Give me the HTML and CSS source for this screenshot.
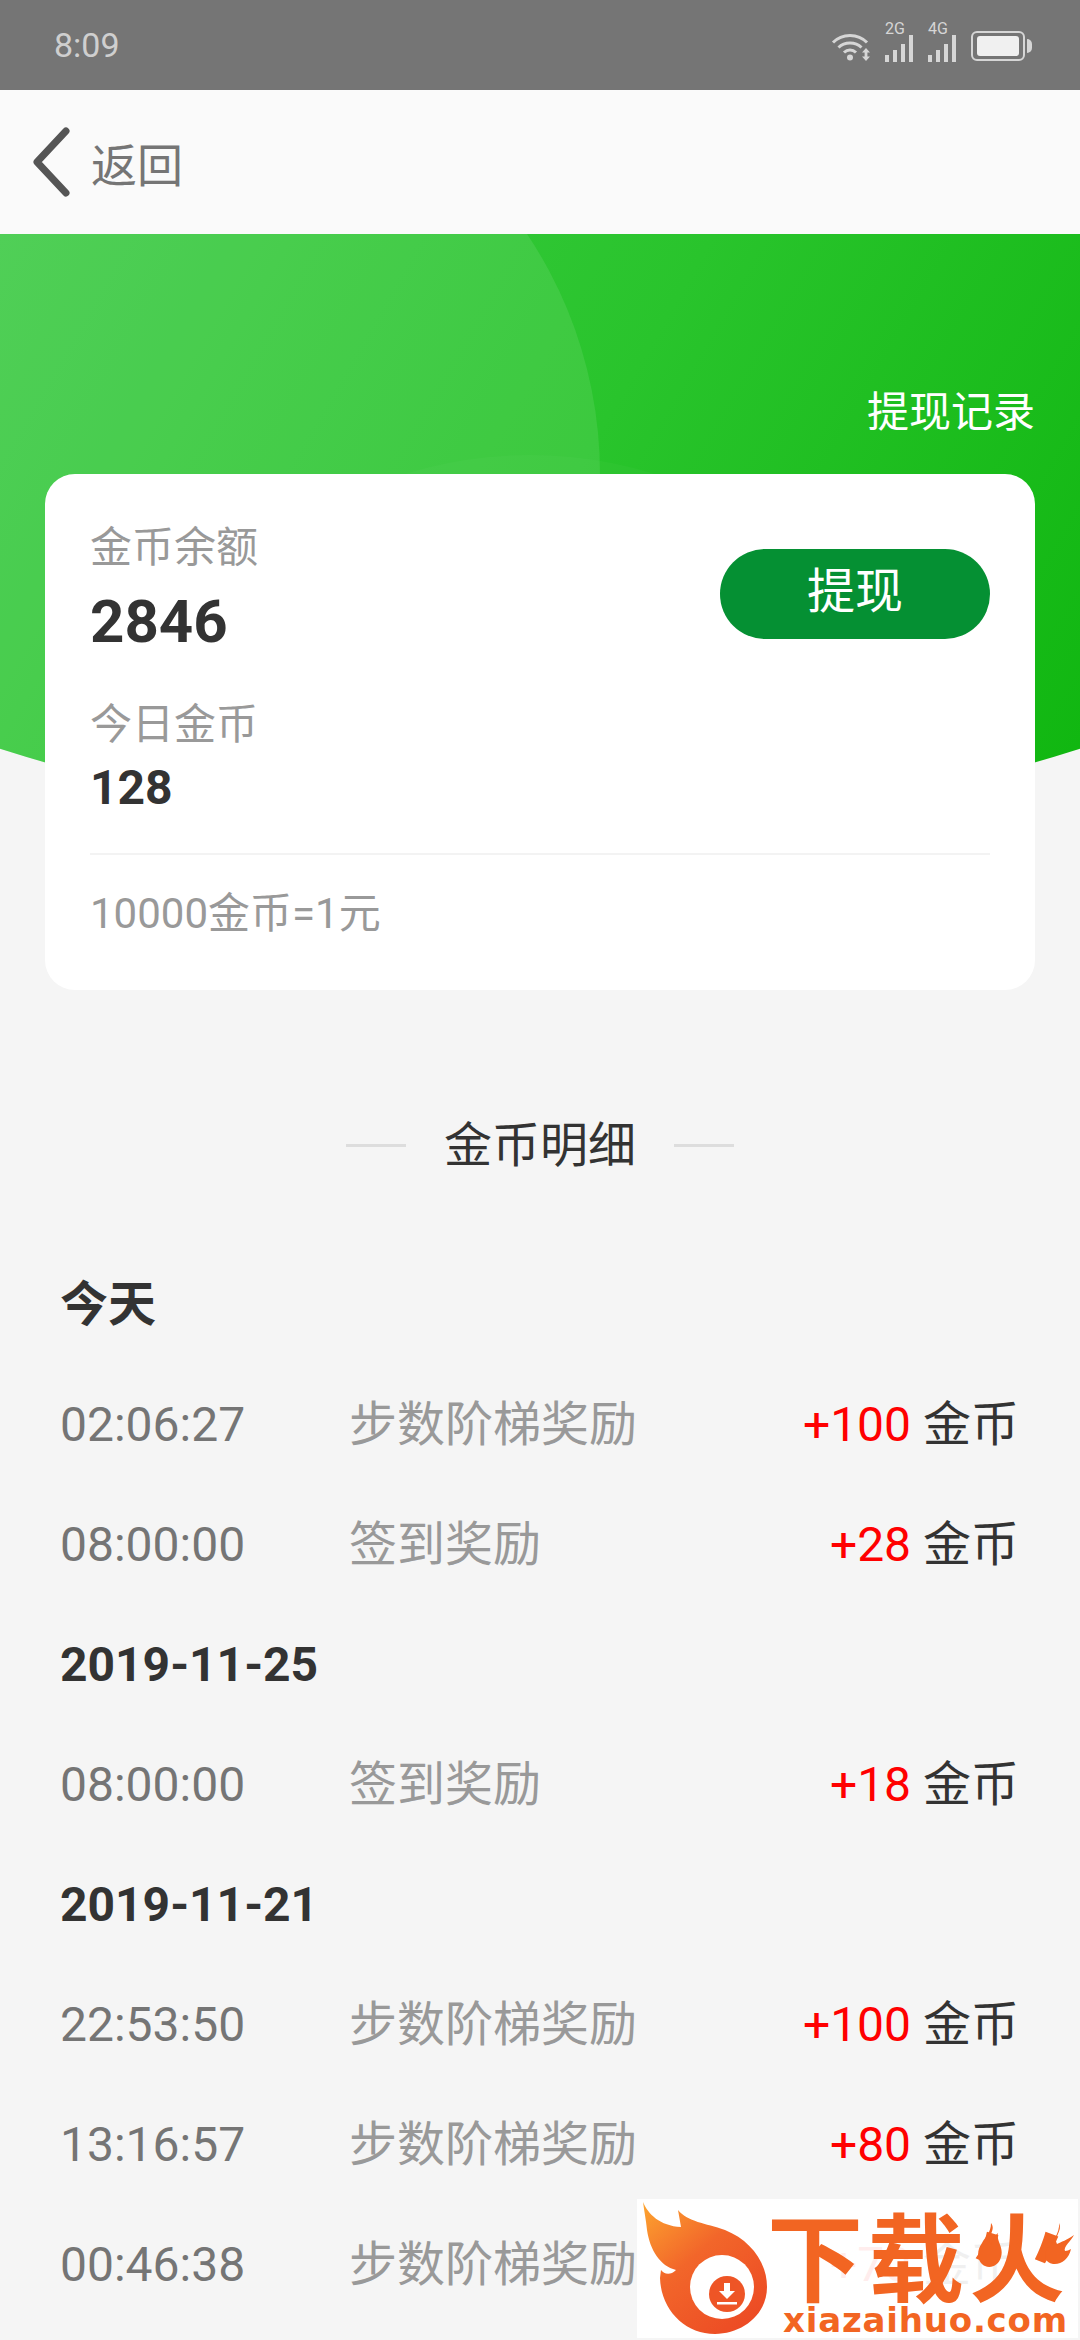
FILE: index.html
```html
<!DOCTYPE html>
<html lang="zh-CN">
  <head>
    <meta charset="UTF-8" />
    <meta name="viewport" content="width=device-width, initial-scale=1.0" />
    <title>金币明细</title>
    <link rel="stylesheet" href="styles.css">
  </head>
  <body>
    <div class="status">
      <span class="status-time">8:09</span>
      <div class="status-icons">
        <svg class="ic-wifi" width="40" height="30" viewBox="0 0 40 30">
          <path d="M2 10.5C11 1 27 1 36 10.5M7.5 15.500C13.500 9.500 24.500 9.500 30.500 15.500M13 20.500C16.500 17 21.500 17 25 20.500" fill="none" stroke="#d6d6d6" stroke-width="3" />
          <circle cx="19" cy="25.500" r="3" fill="#d6d6d6" />
          <path d="M35 16l4 4.500h-2.600v4H39L35 29l-4-4.500h2.600v-4H31z" fill="#d6d6d6" />
        </svg>
        <div class="sig">
          <span class="sig-label">2G</span>
          <span class="sig-bar h1"></span><span class="sig-bar h2"></span><span class="sig-bar h3"></span><span class="sig-bar h4"></span>
        </div>
        <div class="sig">
          <span class="sig-label">4G</span>
          <span class="sig-bar h1"></span><span class="sig-bar h2"></span><span class="sig-bar h3"></span><span class="sig-bar h4"></span>
        </div>
        <div class="batt"><div class="batt-fill"></div></div>
        <div class="batt-nub"></div>
      </div>
    </div>

    <div class="nav">
      <svg class="back-ic" width="40" height="70" viewBox="0 0 40 70">
        <path d="M34 4L5 35l29 31" fill="none" stroke="#555555" stroke-width="7" stroke-linecap="round" stroke-linejoin="round" />
      </svg>
      <span class="back-text">返回</span>
    </div>

    <div class="hero">
      <div class="hero-bg">
        <div class="hero-circle"></div>
        <div class="hero-circle2"></div>
      </div>
      <div class="record-link">提现记录</div>

      <div class="card">
        <div class="card-head">
          <div>
            <div class="label">金币余额</div>
            <div class="big-num">2846</div>
          </div>
          <div class="btn">提现</div>
        </div>
        <div class="label label-today">今日金币</div>
        <div class="mid-num">128</div>
        <div class="card-line"></div>
        <div class="rate">10000金币=1元</div>
      </div>
    </div>

    <div class="sec-title">
      <span class="sec-dash"></span>
      <span>金币明细</span>
      <span class="sec-dash"></span>
    </div>

    <div class="list">
      <div class="day">今天</div>
      <div class="row">
        <span class="time">02:06:27</span>
        <span class="desc">步数阶梯奖励</span>
        <span class="amount"><b>+100</b> 金币</span>
      </div>
      <div class="row">
        <span class="time">08:00:00</span>
        <span class="desc">签到奖励</span>
        <span class="amount"><b>+28</b> 金币</span>
      </div>
      <div class="day">2019-11-25</div>
      <div class="row">
        <span class="time">08:00:00</span>
        <span class="desc">签到奖励</span>
        <span class="amount"><b>+18</b> 金币</span>
      </div>
      <div class="day">2019-11-21</div>
      <div class="row">
        <span class="time">22:53:50</span>
        <span class="desc">步数阶梯奖励</span>
        <span class="amount"><b>+100</b> 金币</span>
      </div>
      <div class="row">
        <span class="time">13:16:57</span>
        <span class="desc">步数阶梯奖励</span>
        <span class="amount"><b>+80</b> 金币</span>
      </div>
      <div class="row">
        <span class="time">00:46:38</span>
        <span class="desc">步数阶梯奖励</span>
        <span class="amount"><b>+70</b> 金币</span>
      </div>
    </div>

    <div class="wm">
      <svg class="wm-logo" width="130" height="135" viewBox="0 0 130 135">
        <defs>
          <linearGradient id="flame" x1="0" y1="0" x2="0.8" y2="1">
            <stop offset="0" stop-color="#fda52f" />
            <stop offset="0.45" stop-color="#f2662a" />
            <stop offset="1" stop-color="#ec4a24" />
          </linearGradient>
        </defs>
        <path d="M6 3C11 15 23 27 44 28L41 11C51 23 68 24 88 31C113 41 130 63 130 88C130 116 105 135 78 135C48 135 24 111 23 79L24 71C27 75 33 77 39 71C23 67 13 51 10 31C9 21 7 11 6 3Z" fill="url(#flame)" />
        <circle cx="85" cy="88" r="32" fill="#ffffff" />
        <circle cx="90" cy="95" r="18" fill="#ee5526" />
        <path d="M87 84h6v8h5l-8 8-8-8h5zM80 103h20v2.500H80z" fill="#ffffff" />
      </svg>
      <div class="wm-text">
        <div class="wm-cn">下载火</div>
        <div class="wm-en">xiazaihuo.com</div>
      </div>
      <svg class="wm-flames" width="100" height="50" viewBox="0 0 100 50">
        <path d="M14 0C20 8 8 14 14 22C16 18 16 14 21 10C19 18 27 24 24 34C22 42 14 46 8 43C0 39-1 28 5 20C8 14 14 10 14 0Z" fill="#f26522" />
        <path d="M82 0C86 8 76 14 80 21C84 19 90 17 97 12C94 18 86 24 88 28C90 28 92 27 94 26C92 36 84 42 76 41C68 40 66 32 70 26C75 20 83 10 82 0Z" fill="#f26522" />
      </svg>
    </div>
  </body>
</html>
```

FILE: styles.css
```css
html,
body {
  margin: 0;
  padding: 0;
}

body {
  position: relative;
  width: 1080px;
  height: 2340px;
  overflow: hidden;
  background: #f5f5f5;
  font-family: Roboto, "Noto Sans CJK SC", sans-serif;
  color: #333333;
}

/* status bar */
.status {
  height: 90px;
  background: #757575;
  display: flex;
  align-items: center;
  justify-content: space-between;
  padding: 0 48px 0 54px;
}

.status-time {
  font-size: 34px;
  color: #cfcfcf;
}

.status-icons {
  display: flex;
  align-items: flex-end;
  height: 34px;
}

.ic-wifi {
  margin-right: 14px;
}

.sig {
  position: relative;
  display: flex;
  align-items: flex-end;
  gap: 4px;
  height: 34px;
  margin-right: 15px;
}

.sig-label {
  position: absolute;
  left: 0;
  top: -7px;
  font-size: 16px;
  line-height: 15px;
  color: #d6d6d6;
}

.sig-bar {
  width: 4px;
  background: #d6d6d6;
}

.h1 {
  height: 7px;
}

.h2 {
  height: 12px;
}

.h3 {
  height: 18px;
}

.h4 {
  height: 27px;
}

.batt {
  width: 54px;
  height: 30px;
  box-sizing: border-box;
  border: 2px solid #d6d6d6;
  border-radius: 6px;
  padding: 3px 4px;
  margin: 0 2px 1px 0;
}

.batt-fill {
  height: 100%;
  background: #f0f0f0;
  border-radius: 3px;
}

.batt-nub {
  width: 5px;
  height: 14px;
  margin-bottom: 9px;
  background: #d6d6d6;
  border-radius: 0 5px 5px 0;
}

/* nav */
.nav {
  height: 144px;
  background: #fafafa;
  display: flex;
  align-items: center;
  padding-left: 32px;
}

.back-text {
  font-size: 46px;
  color: #757575;
  margin-left: 19px;
}

/* hero + card */
.hero {
  position: relative;
  padding-top: 148px;
}

.hero-bg {
  position: absolute;
  left: 0;
  top: 0;
  width: 1080px;
  height: 600px;
  overflow: hidden;
  background: linear-gradient(120deg, #3fcb47 0%, #29c42c 50%, #0fb60f 100%);
  clip-path: ellipse(1000px 500px at 50% 94px);
}

.hero-circle {
  position: absolute;
  left: -262px;
  top: -191px;
  width: 862px;
  height: 862px;
  border-radius: 50%;
  background: rgba(255, 255, 255, 0.09);
}

.hero-circle2 {
  position: absolute;
  left: 110px;
  top: 221px;
  width: 840px;
  height: 840px;
  border-radius: 50%;
  background: rgba(255, 255, 255, 0.025);
}

.record-link {
  position: relative;
  height: 60px;
  line-height: 62px;
  margin-bottom: 32px;
  padding-right: 45px;
  text-align: right;
  font-size: 42px;
  color: #ffffff;
}

.card {
  position: relative;
  margin: 0 45px;
  height: 516px;
  box-sizing: border-box;
  padding: 46px 45px 0 45px;
  background: #ffffff;
  border-radius: 30px;
}

.card-head {
  display: flex;
  justify-content: space-between;
  align-items: flex-start;
}

.label {
  font-size: 42px;
  line-height: 56px;
  height: 54px;
  color: #999999;
}

.label-today {
  margin-top: 45px;
}

.big-num {
  margin-top: 18px;
  font-size: 60px;
  line-height: 60px;
  font-weight: bold;
  color: #333333;
}

.mid-num {
  margin-top: 8px;
  font-size: 48px;
  line-height: 58px;
  height: 56px;
  font-weight: bold;
  color: #333333;
}

.btn {
  width: 270px;
  height: 90px;
  margin-top: 29px;
  line-height: 86px;
  text-align: center;
  font-size: 48px;
  color: #ffffff;
  background: #059033;
  border-radius: 45px;
}

.card-line {
  height: 2px;
  margin-top: 38px;
  background: #f3f3f3;
}

.rate {
  margin-top: 32px;
  font-size: 42px;
  line-height: 54px;
  height: 54px;
  color: #999999;
}

/* list */
.sec-title {
  display: flex;
  justify-content: center;
  align-items: center;
  gap: 38px;
  height: 60px;
  margin-top: 121px;
  font-size: 48px;
  color: #333333;
}

.sec-dash {
  width: 60px;
  height: 3px;
  margin-top: 9px;
  background: #dddddd;
}

.list {
  margin-top: 74px;
  padding: 0 61px 0 60px;
}

.day,
.row {
  height: 120px;
  line-height: 120px;
  font-size: 48px;
}

.day {
  font-weight: bold;
  color: #333333;
}

.row {
  display: flex;
}

.time {
  width: 289px;
  color: #757575;
}

.desc {
  color: #999999;
}

.amount {
  margin-left: auto;
  color: #333333;
}

.amount b {
  font-weight: normal;
  color: #ff0000;
}

/* watermark over the last row */
.wm {
  position: absolute;
  left: 637px;
  top: 2199px;
  width: 441px;
  height: 139px;
  display: flex;
  background: rgba(255, 255, 255, 0.93);
}

.wm-logo {
  flex: none;
}

.wm-text {
  color: #f26522;
  font-weight: bold;
}

.wm-cn {
  height: 92px;
  line-height: 92px;
  margin-top: 16px;
  font-size: 96px;
  letter-spacing: 5px;
}

.wm-en {
  font-family: "DejaVu Sans", sans-serif;
  height: 34px;
  line-height: 34px;
  margin-top: -4px;
  margin-left: 16px;
  font-size: 34px;
  letter-spacing: 0.8px;
}

.wm-flames {
  position: absolute;
  left: 340px;
  top: 24px;
}
```
